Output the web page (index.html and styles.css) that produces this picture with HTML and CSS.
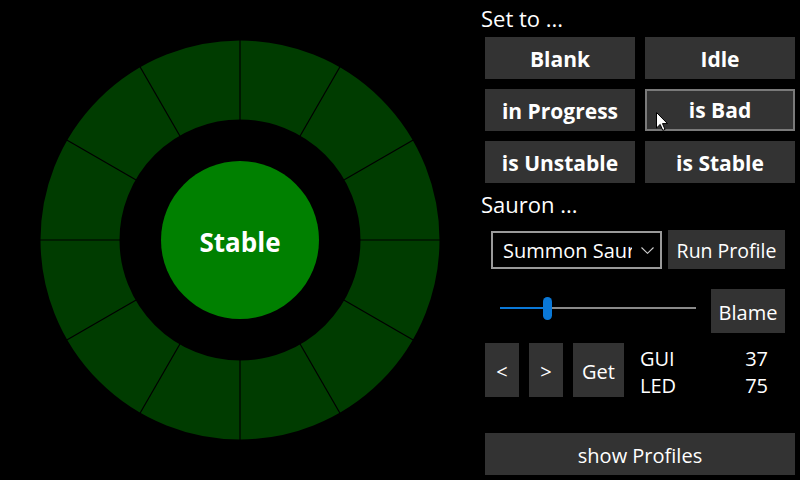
FILE: index.html
```html
<!DOCTYPE html>
<html>
<head>
<meta charset="utf-8">
<link rel="stylesheet" href="styles.css">
</head>
<body>
<div class="app">
  <div class="stage">
    <svg class="ring" width="480" height="480" viewBox="0 0 480 480">
      <circle cx="240" cy="240" r="160" fill="none" stroke="#003c00" stroke-width="79"/>
      <g stroke="#000" stroke-width="1.2">
        <line x1="240" y1="40" x2="240" y2="121"/>
        <line x1="340" y1="66.8" x2="299.5" y2="137"/>
        <line x1="413.2" y1="140" x2="343" y2="180.5"/>
        <line x1="440" y1="240" x2="359" y2="240"/>
        <line x1="413.2" y1="340" x2="343" y2="299.5"/>
        <line x1="340" y1="413.2" x2="299.5" y2="343"/>
        <line x1="240" y1="440" x2="240" y2="359"/>
        <line x1="140" y1="413.2" x2="180.5" y2="343"/>
        <line x1="66.8" y1="340" x2="137" y2="299.5"/>
        <line x1="40" y1="240" x2="121" y2="240"/>
        <line x1="66.8" y1="140" x2="137" y2="180.5"/>
        <line x1="140" y1="66.8" x2="180.5" y2="137"/>
      </g>
      <circle cx="240" cy="240" r="79" fill="#008000"/>
      <text x="240" y="252" class="state">Stable</text>
    </svg>
  </div>
  <div class="panel">
    <div class="heading">Set to ...</div>
    <div class="grid">
      <button class="btn bold">Blank</button>
      <button class="btn bold">Idle</button>
      <button class="btn bold">in Progress</button>
      <button class="btn bold hover">is Bad</button>
      <button class="btn bold">is Unstable</button>
      <button class="btn bold">is Stable</button>
    </div>
    <div class="heading second">Sauron ...</div>
    <div class="row combo-row">
      <div class="combo">
        <span class="combo-text">Summon Sauron</span>
        <svg class="chev" width="13" height="7" viewBox="0 0 13 7"><path d="M0.5 0.5 L6.5 6.3 L12.5 0.5" fill="none" stroke="#cfcfcf" stroke-width="1.1"/></svg>
      </div>
      <button class="btn run">Run Profile</button>
    </div>
    <div class="row slider-row">
      <div class="slider">
        <div class="track-on"></div>
        <div class="thumb"></div>
        <div class="track-off"></div>
      </div>
      <button class="btn blame">Blame</button>
    </div>
    <div class="row nav-row">
      <button class="btn small">&lt;</button>
      <button class="btn small">&gt;</button>
      <button class="btn get">Get</button>
      <div class="stats">
        <div class="stat"><span>GUI</span><span>37</span></div>
        <div class="stat"><span>LED</span><span>75</span></div>
      </div>
    </div>
    <button class="btn wide">show Profiles</button>
  </div>
  <svg class="cursor" width="13" height="20" viewBox="0 0 13 20"><path d="M0.5 0.5 L0.5 16 L4.2 12.4 L6.8 18.4 L9 17.4 L6.5 11.6 L11.5 11.6 Z" fill="#fff" stroke="#000" stroke-width="1"/></svg>
</div>
</body>
</html>
```

FILE: styles.css
```css
* { box-sizing: border-box; }
html, body { margin: 0; padding: 0; background: #000; }
body {
  width: 800px;
  height: 480px;
  overflow: hidden;
  font-family: "Open Sans", "Noto Sans", sans-serif;
  color: #fff;
}
.app {
  position: relative;
  display: flex;
  width: 800px;
  height: 480px;
}
.stage {
  width: 480px;
  height: 480px;
  flex: none;
}
.ring { display: block; }
.state {
  font-family: "Open Sans", sans-serif;
  font-weight: 700;
  font-size: 26px;
  fill: #fff;
  text-anchor: middle;
}
.panel {
  width: 320px;
  flex: none;
  display: flex;
  flex-direction: column;
  padding: 0 5px;
}
.heading {
  height: 37px;
  padding-top: 3px;
  margin-left: -4px;
  font-size: 22px;
  line-height: 30px;
}
.heading.second {
  height: 48px;
  padding-top: 6px;
}
.btn {
  border: 0;
  margin: 0;
  padding: 2px 0 0 0;
  background: #333333;
  color: #fff;
  font-family: "Open Sans", "Noto Sans", sans-serif;
  font-size: 20px;
  display: flex;
  align-items: center;
  justify-content: center;
}
.bold { font-weight: 700; font-size: 21px; }
.grid {
  display: grid;
  grid-template-columns: 150px 150px;
  grid-auto-rows: 42px;
  gap: 10px;
}
.hover { border: 2px solid #7a7a7a; padding-top: 0; }
.row { display: flex; }
.combo-row {
  height: 38px;
  padding-left: 6px;
  gap: 6px;
}
.combo {
  width: 171px;
  height: 38px;
  border: 2px solid #9a9a9a;
  display: flex;
  align-items: center;
  padding-left: 10px;
  padding-top: 1px;
}
.combo-text {
  width: 129px;
  overflow: hidden;
  white-space: nowrap;
  font-size: 20px;
}
.chev { margin-left: 9px; }
.run { width: 117px; height: 39px; margin-top: -1px; font-size: 19.5px; }
.slider-row {
  margin-top: 20px;
  height: 44px;
}
.slider {
  width: 196px;
  margin-left: 15px;
  margin-top: 8px;
  height: 22px;
  display: flex;
  align-items: center;
}
.track-on { width: 43px; height: 2px; background: #0a78d7; }
.thumb { width: 9px; height: 23px; border-radius: 4.5px; background: #0a78d7; }
.track-off { flex: 1; height: 2px; background: #8a8a8a; }
.blame {
  width: 74px;
  height: 44px;
  margin-left: 15px;
}
.nav-row {
  margin-top: 10px;
  height: 54px;
  gap: 10px;
}
.small { width: 34px; height: 54px; }
.get { width: 51px; height: 54px; }
.stats {
  margin-left: 6px;
  margin-top: 2px;
  width: 128px;
  font-size: 20px;
  line-height: 27px;
}
.stat { display: flex; justify-content: space-between; }
.wide {
  margin-top: 36px;
  width: 310px;
  height: 42px;
}
.cursor {
  position: absolute;
  left: 656px;
  top: 112px;
}
```
